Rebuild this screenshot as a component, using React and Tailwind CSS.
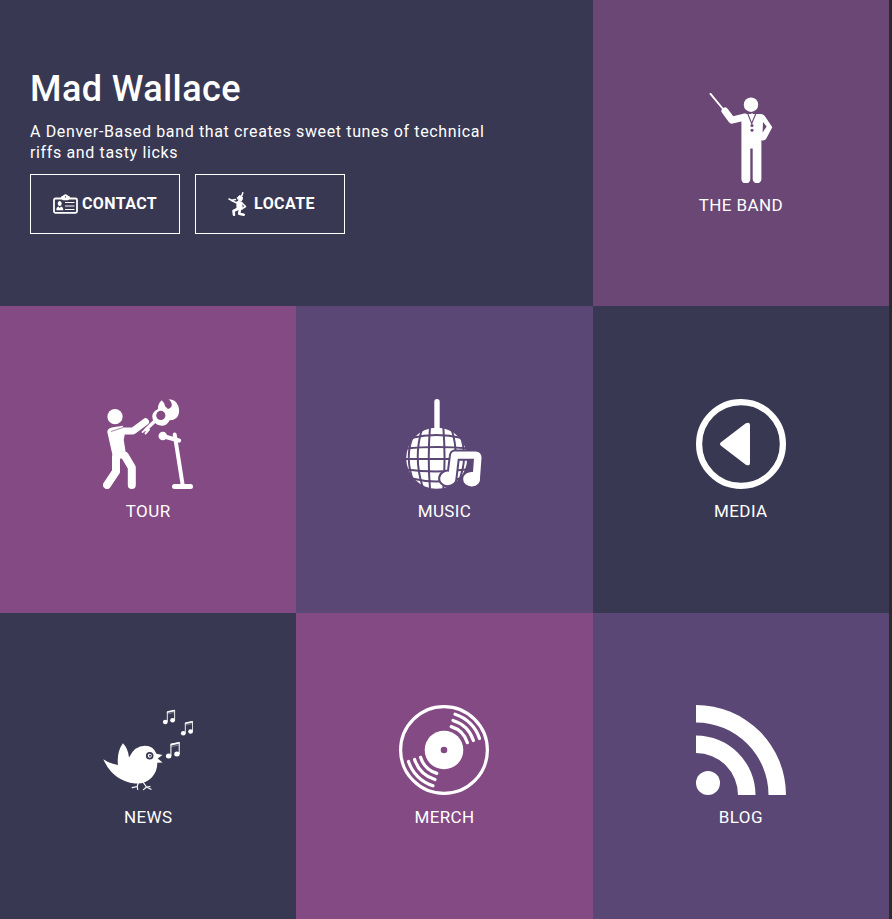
import React from "react";

function Icon({ children }) {
  return (
    <svg viewBox="0 0 90 90" className="h-[90px] w-[90px]" fill="#fff" aria-hidden="true">
      {children}
    </svg>
  );
}

function BandIcon() {
  return (
    <Icon>
      <path d="M14.5 .8L27 16" stroke="#fff" strokeWidth="1.9" strokeLinecap="round" />
      <circle cx="55" cy="11.7" r="7.2" />
      <path d="M29 18l6.8 9.2L49 24" fill="none" stroke="#fff" strokeWidth="7" strokeLinecap="round" strokeLinejoin="round" />
      <path d="M47 21h17.500q3 0 4.600 2.500l7.200 10.800-6 11.200q-1.300 2.500-4.900 1.700V86a4.300 4.300 0 0 1-8.700 0V55.500h-2.400V86a4.400 4.400 0 0 1-8.900 0V27l-3-3z" />
      <path d="M67 29l3.600 4.600-4 5.900z" fill="#6a4775" />
      <path d="M51.700 20.500l4 10 4.200-10" fill="none" stroke="#6a4775" strokeWidth="1.100" />
      <path d="M55 20.500h2l-1 6z" fill="#fff" />
      <circle cx="56" cy="32.600" r="1.500" fill="#6a4775" />
      <circle cx="56" cy="37.200" r="1.500" fill="#6a4775" />
    </Icon>
  );
}

function TourIcon() {
  return (
    <Icon>
      <circle cx="12" cy="17.700" r="7.600" />
      <path d="M4.300 33q0-3.600 4.400-4.600l11-1.600 2 9-1 5 2.500 16-5 3-8.200-1.600z" />
      <g fill="none" stroke="#fff" strokeLinecap="round" strokeLinejoin="round">
        <path d="M13 58v14.500L4 86M22 57l6.800 11.500V86" strokeWidth="8" />
        <path d="M13 32h17l12.500-9.200" strokeWidth="7" />
        <path d="M60 37.200l16 4.300" strokeWidth="4.400" />
        <path d="M71.700 35.500L79.500 85" strokeWidth="4" />
        <path d="M71.500 87.400h16" strokeWidth="5" />
        <path d="M43 30.500L54 20" strokeWidth="3.400" />
        <path d="M39.500 33l5-4M42.500 34.500l3.500-4" strokeWidth="1.900" />
      </g>
      <path d="M8 32.500l12-4" stroke="#844a84" strokeWidth=".7" />
      <circle cx="59.800" cy="37" r="4.300" />
      <path d="M55 10Q54.500 5 58.700 1.200 61.500 3.500 62.300 7.500L65 10Q69 8.500 68.800 5.500 68.500 2.500 65.700.2 73 .2 75.500 7.500 77.500 15 73.300 19 70.500 21.500 66.500 21.300 65 25.300 61 26.500 54 27.500 50.500 22 48.200 17 50.200 14 51.800 11.500 55 10z" />
      <circle cx="57.800" cy="16.400" r="4.600" fill="#844a84" />
    </Icon>
  );
}

function MusicIcon() {
  return (
    <Icon>
      <circle cx="37.700" cy="59.300" r="30.500" />
      <g fill="none" stroke="#5b4775" strokeWidth="2">
        <path d="M31 28q-2.500 31 0 62M44.300 28q2.500 31 0 62M23 30q-9 29 1 59M52.500 30q9 28-1 59M15 34Q4.500 58 15 84M61 35q9 25-2 49" />
        <path d="M12 39q25.500-6 51 0M6 49.500q32-3 64 0M5 60h65M7 70.500q30 4 60 0M13 79.500q24 6 48 0" />
      </g>
      <path d="M38 2.700V31" stroke="#fff" strokeWidth="5.400" strokeLinecap="round" />
      <path d="M55 52.600h21.500q6 .4 6 6.200L81 79a8.500 7.200 0 1 1-7-5.900l1-13.300H58.800L56.500 79a7.700 6.800 0 1 1-6.600-6.300l1.900-15.500q.4-4 3.200-4.600z" stroke="#5b4775" strokeWidth="4" />
      <path d="M55 52.600h21.500q6 .4 6 6.200L81 79a8.500 7.200 0 1 1-7-5.900l1-13.300H58.800L56.500 79a7.700 6.800 0 1 1-6.600-6.300l1.900-15.500q.4-4 3.200-4.600z" />
    </Icon>
  );
}

function MediaIcon() {
  return (
    <Icon>
      <circle cx="45" cy="45" r="41.900" fill="none" stroke="#fff" strokeWidth="6.200" />
      <path d="M25 43.300L49.800 24.300q4.200-2 4.200 2.200v37q0 4.200-4.200 2.200L25 46.700q-2-1.700 0-3.400z" />
    </Icon>
  );
}

function SmallNotes() {
  return (
    <g>
      <ellipse cx="2.300" cy="12.200" rx="2.400" ry="2.200" />
      <ellipse cx="9.600" cy="10.500" rx="2.400" ry="2.200" />
      <path d="M4.300 12V2l7.300-1.500v10" fill="none" stroke="#fff" strokeWidth=".9" />
      <path d="M4.300 1.800l7.300-1.600v1.200L4.300 3zM4.300 4.200l7.300-1.500" stroke="#fff" strokeWidth=".3" />
    </g>
  );
}

function NewsIcon() {
  return (
    <Icon>
      <path d="M.3 54.200q6.500 4.600 14.700 5.800-1.500-13 4.900-21.800 5.200 5 6.100 14.300Q31.500 40.700 42 40.700q8.500.2 11.500 8l6 1.200-4.800 3.700 4.900 4-5.300.2Q54.500 66 49 72.300q-7 7.200-17 6.200Q10 76 .3 54.200z" />
      <circle cx="46.700" cy="50.700" r="3.800" fill="#383853" />
      <circle cx="46.700" cy="50.700" r="2" />
      <circle cx="47" cy="50.700" r="1" fill="#383853" />
      <path d="M35.500 77l-1.300 4.500-5 1.200m5-1.200l.5 3M40 77l3.500 5 4.500 2.300m-4.500-2.300l-3 2.600m3-2.600l3.500-.5" fill="none" stroke="#fff" strokeWidth="1.200" strokeLinecap="round" />
      <g transform="translate(60 4.800)"><SmallNotes /></g>
      <g transform="translate(78 16)"><SmallNotes /></g>
      <g transform="translate(63 37) scale(1.140)"><SmallNotes /></g>
    </Icon>
  );
}

function MerchIcon() {
  const grooves = "M56 9.200A37.500 37.500 0 0 1 80.500 33.500M54 15.500A30.900 30.900 0 0 1 74.400 35.600M52.200 21.600A24.500 24.500 0 0 1 68.400 37.700";
  return (
    <Icon>
      <g fill="none" stroke="#fff" strokeLinecap="round">
        <circle cx="45" cy="45" r="43.400" strokeWidth="3.200" />
        <path d={grooves} strokeWidth="3.200" />
        <path d={grooves} strokeWidth="3.200" transform="rotate(180 45 45)" />
      </g>
      <circle cx="45" cy="45" r="19.300" />
      <circle cx="45" cy="45" r="3.300" fill="#844a84" />
    </Icon>
  );
}

function BlogIcon() {
  return (
    <Icon>
      <circle cx="12" cy="78" r="12" />
      <path d="M0 30.500A59.500 59.500 0 0 1 59.500 90H42A42 42 0 0 0 0 48zM0 0a90 90 0 0 1 90 90H72.500A72.500 72.500 0 0 0 0 17.500z" />
    </Icon>
  );
}

function ContactIcon() {
  return (
    <svg viewBox="0 0 25 25" className="h-[25px] w-[25px]" fill="#fff" aria-hidden="true">
      <rect x="1" y="6.500" width="23" height="14.300" rx="1.500" fill="none" stroke="#fff" strokeWidth="1.800" />
      <path d="M8 5.500q0-1.500 2-1.700.7-1.500 2.500-1.500t2.500 1.500q2 .2 2 1.700v1l-2 1.700h-5L8 6.500z" />
      <circle cx="12.500" cy="4.900" r=".7" fill="#383853" />
      <ellipse cx="6.700" cy="11.500" rx="2" ry="2.500" />
      <path d="M3.300 18.200q0-3.200 2.200-3.700l1.200 1.500L8 14.500q2.300.5 2.300 3.700z" />
      <path d="M12 10.500h9.500M12 14h9.500M12 17.500h9.500" stroke="#fff" strokeWidth="1.200" />
    </svg>
  );
}

function LocateIcon() {
  return (
    <svg viewBox="0 0 25 25" className="h-[25px] w-[25px]" fill="none" stroke="#fff" strokeLinecap="round" strokeLinejoin="round" aria-hidden="true">
      <path d="M17.800.8l-.8 2.500-1.300 1.500" strokeWidth="1.500" />
      <path d="M12.500 5.500l2-2 3 1.700-.5 3-2.500 1z" fill="#fff" strokeWidth="1" />
      <path d="M4 7l2.500 1.200 4-.7M6.500 8.500l4.500 2.200 3-1.200" strokeWidth="1.500" />
      <path d="M12 10.500l4-.5 1.300 7-5 .3z" fill="#fff" strokeWidth="1.500" />
      <path d="M16.500 10.500l4 4-2.300 1.500" strokeWidth="1.600" />
      <path d="M12.500 17l-4 2 .5 3.800M15 17l-.8 4.800 4.500 1" strokeWidth="2.600" />
    </svg>
  );
}

const tiles = [
  { label: "THE BAND", color: "bg-[#6a4775]", Art: BandIcon },
  { label: "TOUR", color: "bg-[#844a84]", Art: TourIcon },
  { label: "MUSIC", color: "bg-[#5b4775]", Art: MusicIcon },
  { label: "MEDIA", color: "bg-[#383853]", Art: MediaIcon },
  { label: "NEWS", color: "bg-[#383853]", Art: NewsIcon },
  { label: "MERCH", color: "bg-[#844a84]", Art: MerchIcon },
  { label: "BLOG", color: "bg-[#5b4775]", Art: BlogIcon },
];

const buttonStyle =
  "flex h-[60px] w-[150px] items-center justify-center gap-1 border border-white text-base font-bold tracking-wide";

export default function App() {
  return (
    <main className="grid min-h-screen grid-cols-3 grid-rows-3 border-r-3 border-[#2b2b2b] bg-[#383853] font-['Roboto',sans-serif] tracking-wide text-white">
      <header className="col-span-2 flex flex-col justify-center bg-[#383853] px-[30px]">
        <h1 className="text-4xl leading-[34px] font-medium">Mad Wallace</h1>
        <p className="mt-[15px] max-w-[475px] text-base leading-[21px] tracking-[0.04em]">
          A Denver-Based band that creates sweet tunes of technical riffs and tasty licks
        </p>
        <div className="mt-[11px] flex gap-[15px]">
          <button type="button" className={buttonStyle}>
            <ContactIcon />
            CONTACT
          </button>
          <button type="button" className={buttonStyle}>
            <LocateIcon />
            LOCATE
          </button>
        </div>
      </header>
      {tiles.map(({ label, color, Art }) => (
        <a key={label} href="#" className={`flex flex-col items-center justify-center ${color}`}>
          <Art />
          <span className="mt-3.5 text-[17px] leading-[17px]">{label}</span>
        </a>
      ))}
    </main>
  );
}
